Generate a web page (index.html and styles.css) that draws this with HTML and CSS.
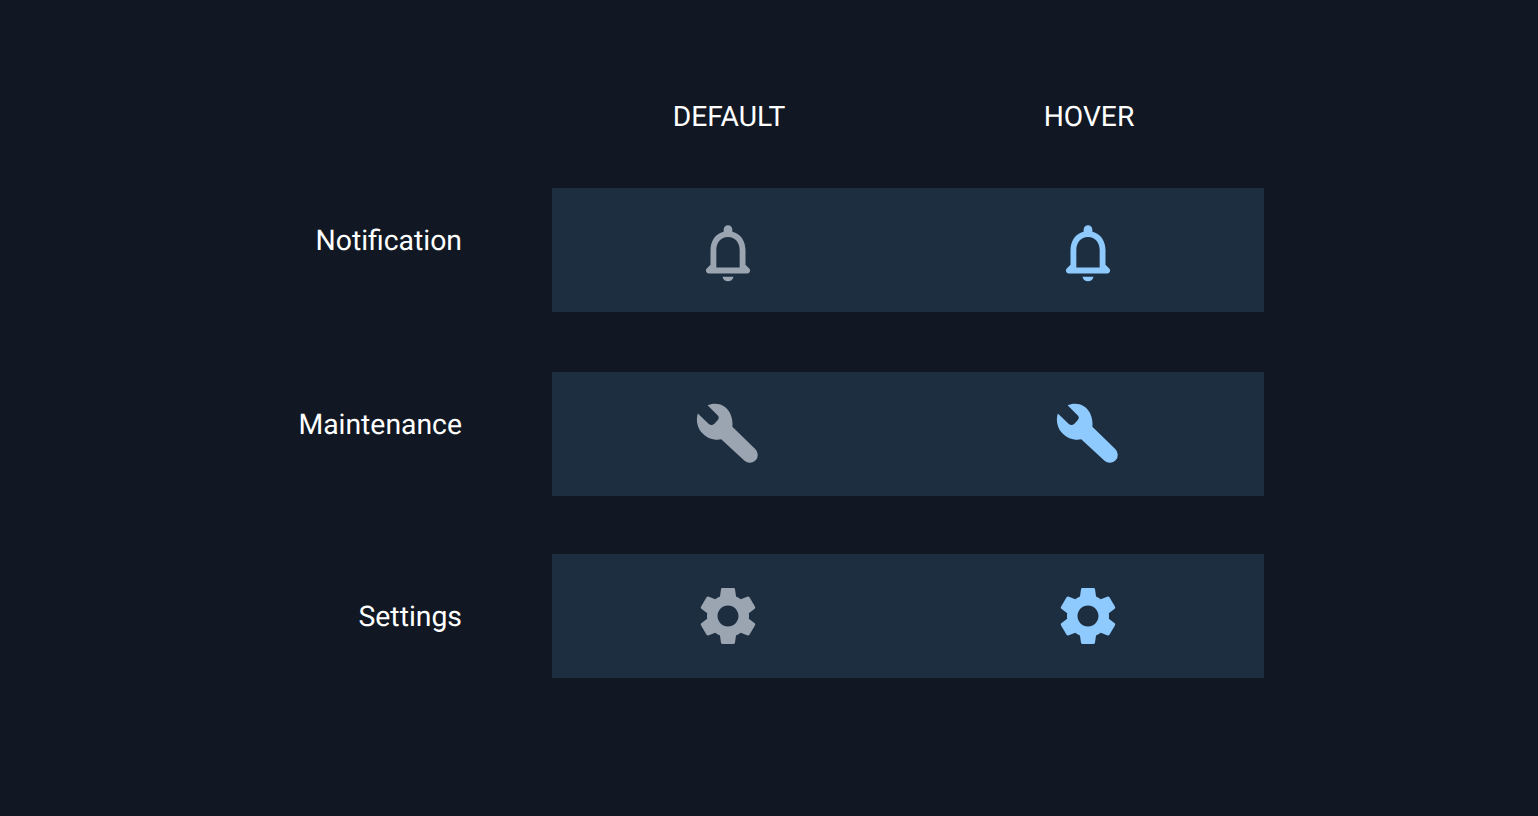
FILE: index.html
```html
<!DOCTYPE html>
<html lang="en">
<head>
<meta charset="utf-8">
<title>Icon states</title>
<link rel="stylesheet" href="styles.css">
</head>
<body>
<svg class="defs" width="0" height="0" aria-hidden="true">
  <symbol id="bell" viewBox="0 0 24 24"><path d="M19.29 17.29L18 16v-5c0-3.07-1.64-5.64-4.5-6.32V4c0-.83-.67-1.5-1.5-1.5s-1.5.67-1.5 1.5v.68C7.63 5.36 6 7.92 6 11v5l-1.29 1.29c-.63.63-.19 1.71.7 1.71h13.17c.9 0 1.34-1.08.71-1.71zM16 17H8v-6c0-2.48 1.51-4.5 4-4.5s4 2.02 4 4.5v6zm-2.1 3.1c-.2 1-1 1.6-1.9 1.6s-1.7-.6-1.9-1.6z"/></symbol>
  <symbol id="wrench" viewBox="0 0 72 72"><path d="M15 6.5C22 3 34 4.5 38.5 15.5C40.5 20.500 41 25.500 40.500 28.500L64 51.500A7.500 7.500 0 0 1 53 63.500L29 41.500C24 43 14 41.500 8 33.500C4 28 3 21 5 15L16 25.500Q19 28 22 25.500L25.500 21.500Q27.500 19 25.500 17Z"/></symbol>
  <symbol id="gear" viewBox="0 0 24 24"><path d="M19.14 12.94c.04-.3.06-.61.06-.94 0-.32-.02-.64-.07-.94l2.03-1.58c.18-.14.23-.41.12-.61l-1.92-3.32c-.12-.22-.37-.29-.59-.22l-2.39.96c-.5-.38-1.03-.7-1.62-.94l-.36-2.54c-.04-.24-.24-.41-.48-.41h-3.84c-.24 0-.43.17-.47.41l-.36 2.54c-.59.24-1.13.57-1.62.94l-2.39-.96c-.22-.08-.47 0-.59.22L2.74 8.87c-.12.21-.08.47.12.61l2.03 1.58c-.05.3-.09.63-.09.94s.02.64.07.94l-2.03 1.58c-.18.14-.23.41-.12.61l1.92 3.32c.12.22.37.29.59.22l2.39-.96c.5.38 1.03.7 1.62.94l.36 2.54c.05.24.24.41.48.41h3.84c.24 0 .44-.17.47-.41l.36-2.54c.59-.24 1.13-.56 1.62-.94l2.39.96c.22.08.47 0 .59-.22l1.92-3.32c.12-.22.07-.47-.12-.61l-2.01-1.58zM12 15.6c-1.98 0-3.6-1.62-3.6-3.6s1.62-3.6 3.6-3.6 3.6 1.62 3.6 3.6-1.62 3.6-3.6 3.6z"/></symbol>
</svg>
<main class="board">
  <div class="heads">
    <div class="head">DEFAULT</div>
    <div class="head">HOVER</div>
  </div>
  <section class="row row-bell">
    <div class="label">Notification</div>
    <div class="band">
      <div class="cell"><svg class="icon bell idle"><use href="#bell"/></svg></div>
      <div class="cell"><svg class="icon bell hot"><use href="#bell"/></svg></div>
    </div>
  </section>
  <section class="row row-wrench">
    <div class="label">Maintenance</div>
    <div class="band">
      <div class="cell"><svg class="icon wrench idle"><use href="#wrench"/></svg></div>
      <div class="cell"><svg class="icon wrench hot"><use href="#wrench"/></svg></div>
    </div>
  </section>
  <section class="row row-gear">
    <div class="label">Settings</div>
    <div class="band">
      <div class="cell"><svg class="icon gear idle"><use href="#gear"/></svg></div>
      <div class="cell"><svg class="icon gear hot"><use href="#gear"/></svg></div>
    </div>
  </section>
</main>
</body>
</html>
```
FILE: styles.css
```css
html, body {
  margin: 0;
  height: 100%;
}
body {
  background: #111824;
  color: #fff;
  font-family: Roboto, "Liberation Sans", sans-serif;
  overflow: hidden;
  text-rendering: geometricPrecision;
}
.defs {
  display: block;
  height: 0;
}
.board {
  width: 1264px;
  padding-top: 99px;
}
.heads {
  display: flex;
  margin-left: 552px;
  height: 89px;
}
.head {
  width: 356px;
  box-sizing: border-box;
  text-align: center;
  font-size: 28.2px;
  line-height: 36px;
}
.head:first-child {
  padding-right: 2px;
}
.head:last-child {
  padding-left: 6px;
}
.row {
  display: flex;
  height: 124px;
}
.row-wrench {
  margin-top: 60px;
}
.row-gear {
  margin-top: 58px;
}
.label {
  width: 462px;
  margin-right: 90px;
  text-align: right;
  font-size: 28.35px;
  line-height: 36px;
  padding-top: 35px;
  box-sizing: border-box;
}
.row-gear .label {
  padding-top: 45px;
}
.band {
  flex: 1;
  display: flex;
  background: #1c2e40;
}
.cell {
  width: 356px;
  box-sizing: border-box;
  display: flex;
  align-items: center;
  justify-content: center;
}
.cell:first-child {
  padding-right: 4px;
}
.cell:last-child {
  padding-left: 4px;
}
.icon {
  width: 70px;
  height: 70px;
  display: block;
}
.bell {
  margin-top: 5px;
}
.idle {
  fill: #9aa5b1;
}
.hot {
  fill: #8fcaff;
}
```
